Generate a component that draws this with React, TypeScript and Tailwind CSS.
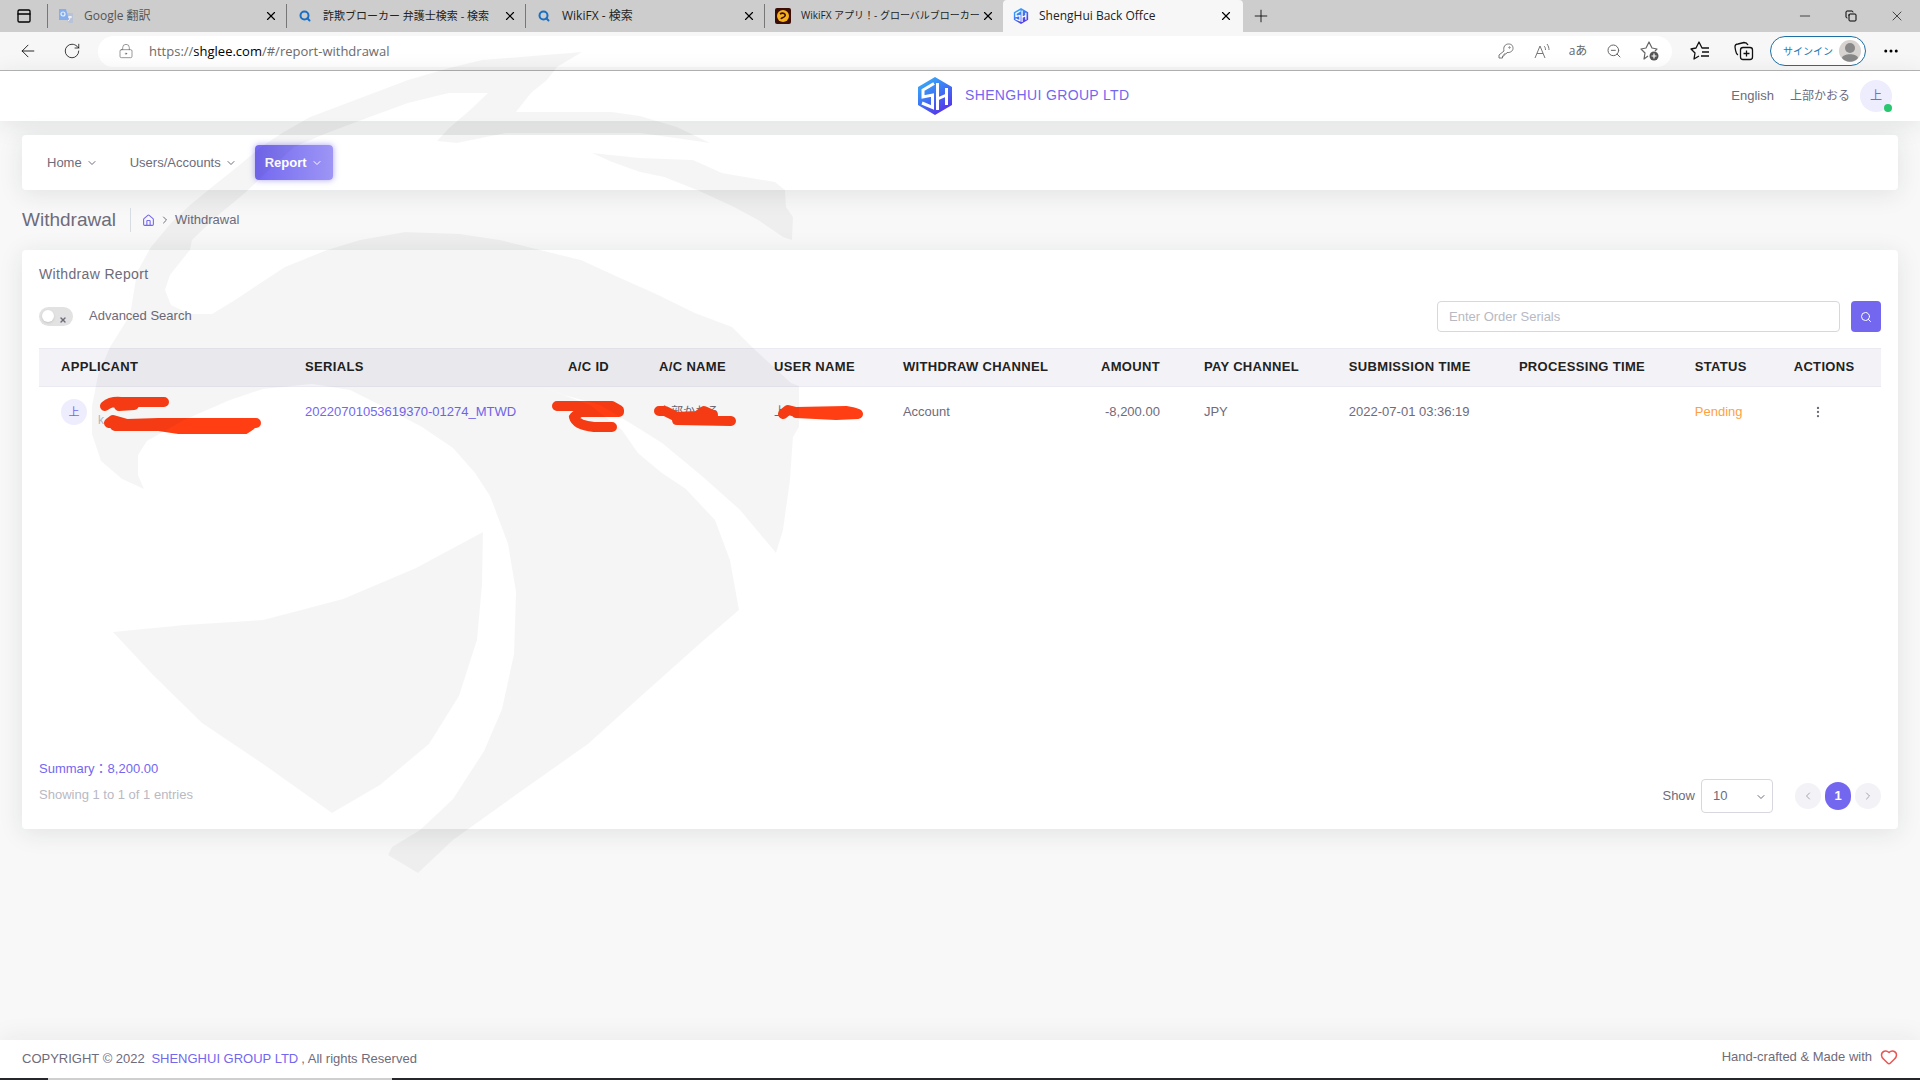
import { useState } from 'react'
import type { ReactNode } from 'react'
import {
  ArrowLeft,
  ChevronDown,
  ChevronLeft,
  ChevronRight,
  Copy,
  Ellipsis,
  EllipsisVertical,
  Heart,
  House,
  LockKeyhole,
  Minus,
  PanelTop,
  Plus,
  RotateCw,
  Search,
  X,
  ZoomOut,
} from 'lucide-react'

const NAV_ITEMS = ['Home', 'Users/Accounts', 'Report']

const COLUMNS = [
  { label: 'Applicant', width: 'w-[13.25%]' },
  { label: 'Serials', width: 'w-[14.28%]' },
  { label: 'A/C ID', width: 'w-[4.94%]' },
  { label: 'A/C Name', width: 'w-[6.24%]' },
  { label: 'User Name', width: 'w-[7%]' },
  { label: 'Withdraw Channel', width: 'w-[10.75%]' },
  { label: 'Amount', width: 'w-[5.59%]' },
  { label: 'Pay Channel', width: 'w-[7.87%]' },
  { label: 'Submission Time', width: 'w-[9.23%]' },
  { label: 'Processing Time', width: 'w-[9.55%]' },
  { label: 'Status', width: 'w-[5.37%]' },
  { label: 'Actions', width: 'w-[5.93%]' },
]

const Logo = ({ id, className }: { id: string; className: string }) => (
  <svg viewBox="0 0 36 38" className={className} aria-hidden="true">
    <defs>
      <linearGradient id={id} x1="0" y1="0" x2="0.6" y2="1">
        <stop offset="0" stopColor="#36b9fb" />
        <stop offset="0.5" stopColor="#3d7cf5" />
        <stop offset="1" stopColor="#5536ea" />
      </linearGradient>
    </defs>
    <path d="M18 0 35 10v18L18 38 1 28V10Z" fill={`url(#${id})`} />
    <path d="M17 6.500 6 13v7l9.500-2v12.500L5 26" fill="none" stroke="#fff" strokeWidth="3" />
    <path d="M20.500 6v27M29.500 11v17M20.500 22l9-4" fill="none" stroke="#fff" strokeWidth="3" />
  </svg>
)

const TranslateIcon = () => (
  <svg viewBox="0 0 16 16" className="size-4" aria-hidden="true">
    <path d="M8 5h7v10h-4L8 11z" fill="#b9c3d8" />
    <path d="M1 1h7l3 11H1z" fill="#86aeed" />
    <circle cx="5" cy="6" r="2" fill="none" stroke="#e8effa" strokeWidth="1.2" />
    <path d="M10 9h4M12 8v1c0 2-1 3-2 4" fill="none" stroke="#fff" />
  </svg>
)

const BingIcon = () => <Search className="size-3 text-[#1a6fc4]" strokeWidth={4} />

const WikiIcon = () => (
  <svg viewBox="0 0 16 16" className="size-4" aria-hidden="true">
    <rect width="16" height="16" rx="2" fill="#3b0d05" />
    <circle cx="8" cy="8" r="6" fill="#f5b21c" />
    <path d="M5 6c3-2 6 0 5 2s-3 1-4 3" fill="none" stroke="#3b0d05" strokeWidth="1.6" />
  </svg>
)

const TABS: { title: string; icon: ReactNode; text: string }[] = [
  { title: 'Google 翻訳', icon: <TranslateIcon />, text: 'text-xs text-[#555]' },
  { title: '詐欺ブローカー 弁護士検索 - 検索', icon: <BingIcon />, text: 'text-[11px]' },
  { title: 'WikiFX - 検索', icon: <BingIcon />, text: 'text-xs' },
  { title: 'WikiFX アプリ！- グローバルブローカー', icon: <WikiIcon />, text: 'text-[10px]' },
]

const TabBar = () => (
  <div className="flex h-8 items-center bg-[#cdcdcd] text-xs text-[#222]">
    <button className="flex w-[47px] shrink-0 justify-center" aria-label="Tab actions">
      <PanelTop className="size-4 text-black" />
    </button>
    {TABS.map((tab) => (
      <div key={tab.title} className="flex h-6 w-[239px] items-center border-l border-[#777] pr-2 pl-2">
        <span className="flex w-5 shrink-0 justify-center">{tab.icon}</span>
        <span className={`ml-2 flex-1 whitespace-nowrap ${tab.text}`}>{tab.title}</span>
        <button aria-label="Close tab"><X className="size-[14px] text-black" strokeWidth={2} /></button>
      </div>
    ))}
    <div className="flex h-8 w-60 items-center rounded-t bg-[#f7f7f7] pr-[10px] pl-2">
      <span className="flex w-5 shrink-0 justify-center"><Logo id="tab-logo" className="size-4" /></span>
      <span className="ml-2 flex-1 whitespace-nowrap">ShengHui Back Offce</span>
      <button aria-label="Close tab"><X className="size-[14px] text-black" strokeWidth={2} /></button>
    </div>
    <button className="ml-2 flex w-5 justify-center" aria-label="New tab"><Plus className="size-5 text-black" strokeWidth={1} /></button>
    <div className="ml-auto flex text-black">
      <button className="flex w-[46px] justify-center" aria-label="Minimize"><Minus className="size-4" strokeWidth={1} /></button>
      <button className="flex w-[46px] items-center justify-center" aria-label="Restore"><Copy className="size-3 -scale-x-100 -rotate-90" strokeWidth={2} /></button>
      <button className="flex w-[46px] items-center justify-center" aria-label="Close"><X className="size-4" strokeWidth={1} /></button>
    </div>
  </div>
)

const KeyIcon = () => (
  <svg viewBox="0 0 16 16" className="size-4" fill="none" stroke="#777" strokeLinejoin="round" aria-hidden="true">
    <path d="M6 8C5 4 7 1 10.500 1S15 3 15 5.500 12 10 9 9.500L8 11H6v2H4.500v2H1v-3Z" />
    <circle cx="11.500" cy="4.500" r=".7" />
  </svg>
)

const StarAdd = () => (
  <svg viewBox="0 0 20 20" className="size-5" fill="none" stroke="#666" strokeWidth="1.2" aria-hidden="true">
    <path d="M8 15 4 18l1-6-4-4 5-1 3-6 3 6 5 1-2 2" strokeLinejoin="round" />
    <circle cx="14" cy="15" r="4.500" fill="#555" stroke="none" />
    <path d="M14 12.500v5M11.500 15h5" stroke="#fff" />
  </svg>
)

const Favorites = () => (
  <svg viewBox="0 0 20 20" className="size-5" fill="none" stroke="#111" strokeWidth="1.3" aria-hidden="true">
    <path d="m9 15-5 3 1-6-4-4 5-1 3-6 3 6h7M12 11h7M11 15h8" strokeLinejoin="round" />
  </svg>
)

const Collections = () => (
  <svg viewBox="0 0 20 20" className="size-5" fill="none" stroke="#111" strokeWidth="1.3" aria-hidden="true">
    <rect x="6.500" y="6.500" width="12" height="12" rx="2.500" />
    <path d="M12.500 9.500v6M9.500 12.500h6M4 14c-2-1-2-2-2.500-5L1 6c0-2 1-3 3-3l6-1.500c2 0 3 .5 4 2.500" />
  </svg>
)

const ReadAloud = () => (
  <svg viewBox="0 0 20 20" className="size-5" fill="none" stroke="#777" aria-hidden="true">
    <path d="m3 17 5-12 5 12M5 12.500h6M12 5c1 1 1.500 2 1.500 4M15 3c1.500 2 2 4 2 6" />
  </svg>
)

const AddressBar = () => (
  <div className="flex h-[39px] items-center border-b border-[#b5b5b5] bg-[#f7f7f7]">
    <button className="ml-[18px] flex w-5" aria-label="Back"><ArrowLeft className="size-5 text-black" strokeWidth={1} /></button>
    <button className="ml-6 flex w-5 justify-center" aria-label="Refresh"><RotateCw className="size-[18px] text-black" strokeWidth={1} /></button>
    <div className="ml-4 flex h-[31px] flex-1 items-center rounded-full bg-white pr-3 pl-5 text-[#666]">
      <LockKeyhole className="size-4 shrink-0" strokeWidth={1} />
      <button className="ml-[15px] flex-1 text-left text-[13px] text-[#6b6b6b]">
        https://<span className="text-black">shglee.com</span>/#/report-withdrawal
      </button>
      <div className="flex items-center gap-4">
        <button className="flex w-5 justify-center" aria-label="Password"><KeyIcon /></button>
        <button className="flex w-5 justify-center" aria-label="Read aloud"><ReadAloud /></button>
        <button className="flex w-5 justify-center text-xs whitespace-nowrap">aあ</button>
        <button className="flex w-5 justify-center" aria-label="Zoom out"><ZoomOut className="size-4" strokeWidth={1.5} /></button>
        <button className="flex w-5 justify-center" aria-label="Add to favorites"><StarAdd /></button>
      </div>
    </div>
    <div className="ml-[18px] flex items-center gap-6">
      <button aria-label="Favorites"><Favorites /></button>
      <button aria-label="Collections"><Collections /></button>
    </div>
    <button className="ml-4 flex h-[30px] w-24 items-center justify-between rounded-full border border-[#1d6fa5] bg-white pr-1 pl-3 text-[10px] whitespace-nowrap text-[#1d78b5]">
      サインイン
      <svg viewBox="0 0 22 22" className="size-[22px]" aria-hidden="true">
        <circle cx="11" cy="11" r="11" fill="#d6d3d0" />
        <circle cx="11" cy="8" r="5" fill="#888" />
        <path d="M3 18c1-5 15-5 16 0-4 5-12 5-16 0Z" fill="#888" />
      </svg>
    </button>
    <button className="mr-5 ml-4 flex" aria-label="Settings"><Ellipsis className="size-[18px] text-black" /></button>
  </div>
)

const AppHeader = () => (
  <header className="flex h-[50px] shrink-0 items-center bg-white pr-7 pl-[calc(50%-43px)] shadow-[0_4px_24px_rgba(34,41,47,0.1)]">
    <a href="#/" className="flex items-center gap-3 text-sm tracking-wide text-[#7367f0]">
      <Logo id="brand-logo" className="h-[38px] w-9" />
      <span className="pb-[2px]">SHENGHUI GROUP LTD</span>
    </a>
    <div className="ml-auto flex items-center text-[13px]">
      <a href="#/language">English</a>
      <span className="ml-4 text-xs">上部かおる</span>
      <span className="relative ml-[10px] flex size-8 items-center justify-center rounded-full bg-[#eeedfd] text-xs text-[#7367f0]">
        上
        <span className="absolute right-0 bottom-0 size-2 rounded-full bg-[#28c76f]" />
      </span>
    </div>
  </header>
)

const Redaction = ({ d, className, viewBox }: { d: string; className: string; viewBox: string }) => (
  <svg viewBox={viewBox} className={`absolute ${className}`} aria-hidden="true">
    <path d={d} fill="none" stroke="#ff3e14" strokeWidth="10" strokeLinecap="round" strokeLinejoin="round" />
  </svg>
)

const ReportTable = () => (
  <table className="w-full table-fixed text-left">
    <colgroup>
      {COLUMNS.map((col) => <col key={col.label} className={col.width} />)}
    </colgroup>
    <thead>
      <tr className="h-[38px] border-y border-[#ebe9f1] bg-[#f3f2f7] tracking-wide whitespace-nowrap text-[#222] uppercase">
        {COLUMNS.map((col) => (
          <th key={col.label} className={`pb-[2px] pl-[22px] font-bold ${col.label === 'Amount' ? 'pr-[22px] text-right' : ''}`}>{col.label}</th>
        ))}
      </tr>
    </thead>
    <tbody>
      <tr className="h-[50px] whitespace-nowrap">
        <td className="pl-[22px]">
          <div className="relative flex items-center gap-[11px]">
            <span className="flex size-[26px] items-center justify-center rounded-full bg-[#eeedfd] text-[11px] text-[#7367f0]">上</span>
            <span className="pt-4 text-xs text-[#b9b9c3]">k</span>
            <Redaction
              className="top-[-3px] left-[38px] h-[42px] w-[164px]"
              viewBox="0 0 164 42"
              d="M6 13Q12 8 22 9H65M20 13 35 12M10 30 14 27 28 31 60 30 157 30M16 33H60L80 36H146L152 32"
            />
          </div>
        </td>
        <td className="pl-[22px]"><a href="#/order" className="text-[#7367f0]">20220701053619370-01274_MTWD</a></td>
        <td className="pl-[22px]">
          <div className="relative h-5">
            <Redaction className="top-[-5px] left-[-18px] h-[38px] w-20" viewBox="0 0 80 38" d="M7 9H62L69 13 69 15H30L24 20Q26 28 44 30L62 30M30 12H66" />
          </div>
        </td>
        <td className="pl-[22px]">
          <div className="relative text-xs">
            上部かおる
            <Redaction className="top-[-1px] left-[-6px] h-[26px] w-[86px]" viewBox="0 0 86 26" d="M6 8 12 8 24 14 44 13 51 8 60 12 24 17 78 18" />
          </div>
        </td>
        <td className="pl-[22px]">
          <div className="relative text-xs">
            上
            <Redaction className="top-[-1px] left-[2px] h-5 w-[88px]" viewBox="0 0 88 20" d="M7 11 12 7 20 9 70 8Q78 9 82 11L60 12 20 10" />
          </div>
        </td>
        <td className="pl-[22px]">Account</td>
        <td className="pr-[22px] text-right">-8,200.00</td>
        <td className="pl-[22px]">JPY</td>
        <td className="pl-[22px]">2022-07-01 03:36:19</td>
        <td />
        <td className="pl-[22px] text-[#ff9f43]">Pending</td>
        <td className="pl-[22px]">
          <button className="flex w-12 justify-center" aria-label="Row actions"><EllipsisVertical className="size-[14px]" /></button>
        </td>
      </tr>
    </tbody>
  </table>
)

// Bird emblem laid over the whole page
const Watermark = () => (
  <svg viewBox="90 50 710 827" className="pointer-events-none absolute top-[50px] left-[90px] h-[827px] w-[710px] fill-black/4" aria-hidden="true">
    <path d="M582 52 482 60 449 68 408 80 363 97 310 117 282 133 261 147 237 167 212 187 190 205 171 223 151 247 137 272 133 297 130 315 110 347 98 375 92 406 92 434 101 461 122 479 144 489 138 475 138 455 147 441 184 420 230 400 263 389 312 384 350 390 380 405 422 427 453 448 475 473 490 496 508 544 516 592 514 654 502 709 484 751 453 799 420 830 392 847 388 855 418 873 453 840 520 792 588 744 649 689 704 640 739 610 730 560 715 520 686 489 662 473 638 453 622 430 590 405 540 386 564 395 600 405 630 423 662 443 703 477 740 510 776 553 783 530 790 480 793 437 799 427V386L791 383 752 347 732 327 695 313 654 293 618 277 581 260 540 250 500 240 460 234 405 232 360 240 327 250 285 267 250 290 235 300 212 314 190 314 171 305 165 290 170 275 190 250 192 240 216 217 245 193 269 170 294 147 327 133 367 118 408 103 449 93H488L470 110 449 128 437 141 457 143 506 133H640L710 143 677 127 640 116 612 112H516L531 93 547 80 557 67Z" />
    <path d="M592 153 640 158 693 160 722 173 775 182 785 190 786 207 793 217 792 240 783 237 758 220 734 207 697 190 664 177 640 172 612 162Z" />
    <path d="M113 632 184 625 263 620 343 599 416 568 483 532 482 585 477 640 459 696 429 744 380 785 332 813 263 764 202 723 153 675Z" />
  </svg>
)

const App = () => {
  const [advanced, setAdvanced] = useState(false)

  return (
    <div className="relative flex min-h-screen flex-col bg-[#f8f8f8] font-['Liberation_Sans','Noto_Sans_CJK_JP',sans-serif] text-[13px] leading-5 text-[#6e6b7b]">
      <div className="font-['Open_Sans','Noto_Sans_CJK_JP',sans-serif]">
        <TabBar />
        <AddressBar />
      </div>
      <AppHeader />

      <main className="flex-1 px-[22px] pt-[14px] pb-8">
        <nav className="flex h-[55px] items-center rounded bg-white px-[11px] shadow-[0_4px_24px_rgba(34,41,47,0.1)]">
          {NAV_ITEMS.map((item) => (
            <button
              key={item}
              className={`flex h-[35px] items-center gap-1 rounded ${
                item === 'Report'
                  ? 'bg-linear-to-r from-[#7367f0] to-[#9e95f5] px-[10px] font-bold text-white shadow-[0_0_6px_rgba(115,103,240,0.6)]'
                  : 'mr-1 px-[14px]'
              }`}
            >
              {item}
              <ChevronDown className="size-3" />
            </button>
          ))}
        </nav>

        <div className="mt-[18px] flex h-6 items-center">
          <h2 className="border-r border-[#d6dce1] pr-[14px] text-[19px] leading-6">Withdrawal</h2>
          <a href="#/" className="ml-[11px] text-[#7367f0]" aria-label="Home"><House className="size-[13px]" /></a>
          <ChevronRight className="mx-1 size-3" />
          <span>Withdrawal</span>
        </div>

        <section className="mt-[18px] rounded bg-white px-[17px] pt-[14px] pb-4 shadow-[0_4px_24px_rgba(34,41,47,0.1)]">
          <h4 className="text-sm leading-5 tracking-wide">Withdraw Report</h4>
          <div className="mt-[17px] flex h-[31px] items-center">
            <label className="flex items-center gap-4">
              <span className="relative flex">
                <input
                  type="checkbox"
                  checked={advanced}
                  onChange={() => setAdvanced(!advanced)}
                  className="h-[19px] w-[34px] appearance-none rounded-full bg-[#e2e2e2] checked:bg-[#7367f0]"
                />
                <span className="absolute top-[3px] left-[3px] size-3 rounded-full bg-white shadow" />
                <X className="absolute right-[6px] bottom-[2px] size-2" strokeWidth={4} />
              </span>
              <span className="pb-[2px]">Advanced Search</span>
            </label>
            <form className="ml-auto flex gap-[11px]">
              <input
                type="text"
                aria-label="Order serials"
                placeholder="Enter Order Serials"
                className="h-[31px] w-[403px] rounded border border-[#d8d6de] bg-white px-[11px] placeholder:text-[#b9b9c3]"
              />
              <button type="button" className="flex h-[31px] w-[30px] items-center justify-center rounded bg-[#7367f0] text-white" aria-label="Search">
                <Search className="size-3" />
              </button>
            </form>
          </div>

          <div className="mt-4 min-h-[411px]">
            <ReportTable />
          </div>

          <div className="flex items-end">
            <div>
              <p className="text-[#7367f0]">Summary：8,200.00</p>
              <p className="mt-[6px] pb-2 text-[#b9b9c3]">Showing 1 to 1 of 1 entries</p>
            </div>
            <div className="ml-auto flex items-center">
              <label htmlFor="page-size">Show</label>
              <div className="relative ml-[6px]">
                <select id="page-size" className="h-[34px] w-[72px] appearance-none rounded border border-[#d8d6de] bg-white px-[11px]">
                  <option>10</option>
                </select>
                <ChevronDown className="pointer-events-none absolute top-3 right-[6px] size-3" />
              </div>
              <div className="ml-[22px] flex items-center gap-1">
                <button className="flex size-[26px] items-center justify-center rounded-full bg-[#f3f2f7] text-[#a5a3ae]" aria-label="Previous page"><ChevronLeft className="size-3" /></button>
                <button className="flex h-7 w-[26px] items-center justify-center rounded-full bg-[#7367f0] font-bold text-white">1</button>
                <button className="flex size-[26px] items-center justify-center rounded-full bg-[#f3f2f7] text-[#a5a3ae]" aria-label="Next page"><ChevronRight className="size-3" /></button>
              </div>
            </div>
          </div>
        </section>
      </main>

      <footer className="flex h-[38px] shrink-0 items-center bg-white px-[22px] shadow-[0_-4px_24px_rgba(34,41,47,0.06)]">
        <p>
          COPYRIGHT © 2022 <a href="#/" className="mx-[3px] text-[#7367f0]">SHENGHUI GROUP LTD</a>, All rights Reserved
        </p>
        <p className="ml-auto flex items-center gap-2 pb-1">
          Hand-crafted &amp; Made with
          <Heart className="size-[18px] text-[#ea5455]" strokeWidth={2} />
        </p>
      </footer>
      <div className="flex h-[2px] bg-[#25272b]">
        <div className="ml-12 w-[344px] bg-[#cfcfcf]" />
      </div>

      <Watermark />
    </div>
  )
}

export default App
